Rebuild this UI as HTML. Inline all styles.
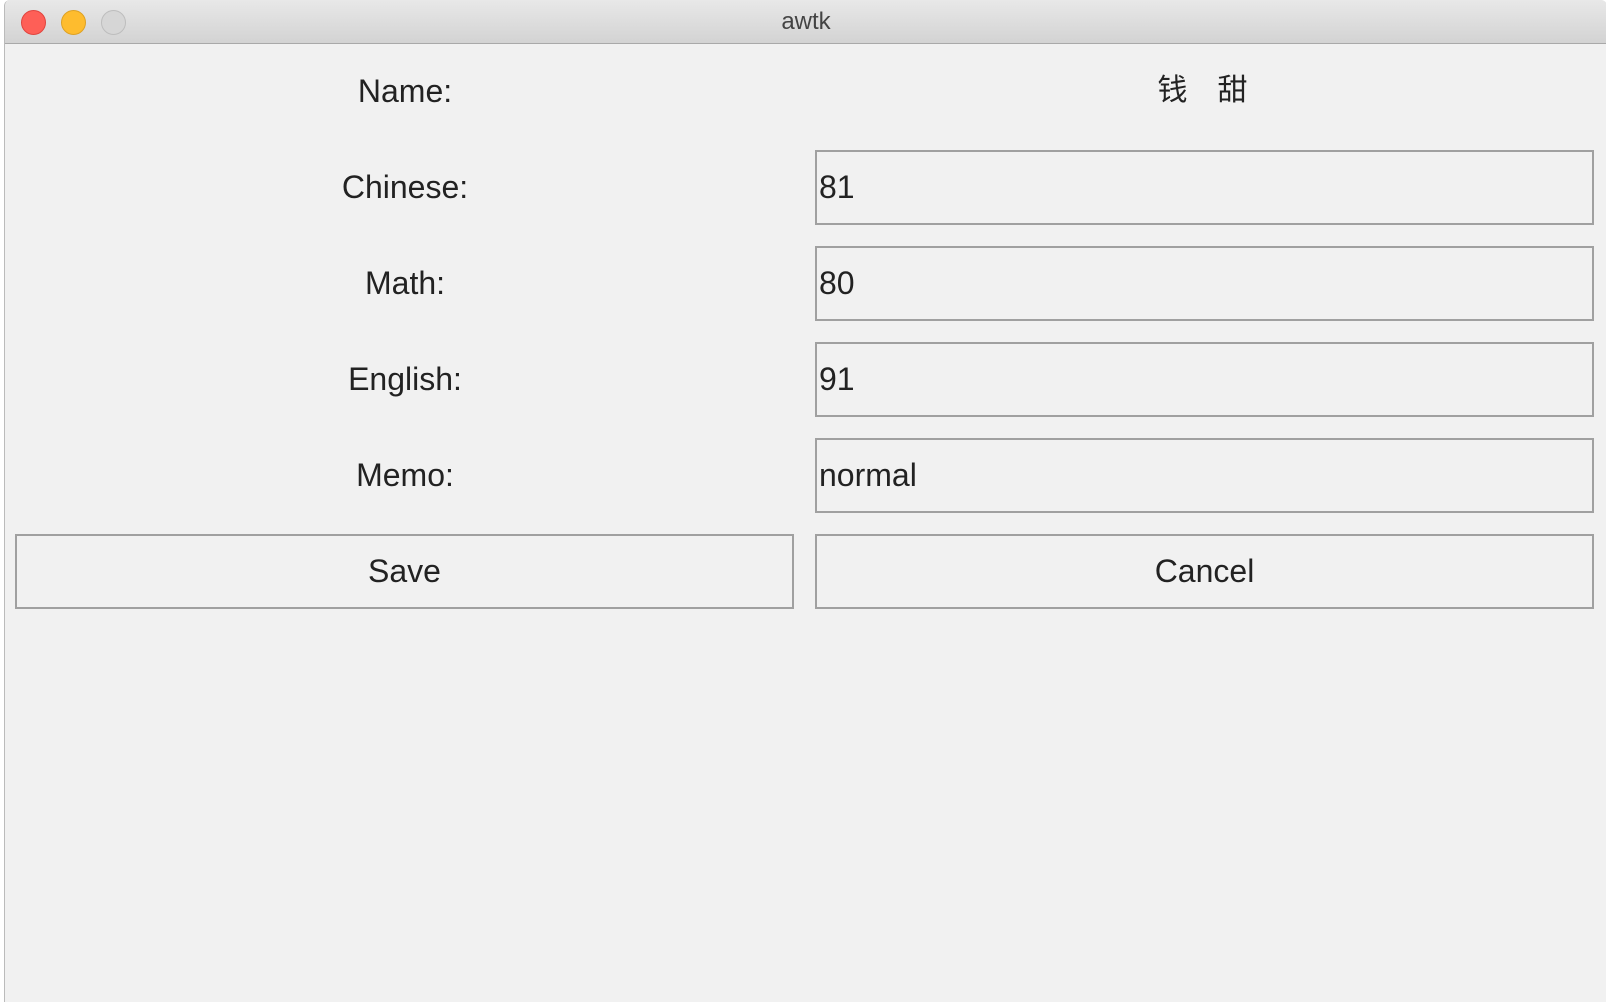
<!DOCTYPE html>
<html><head><meta charset="utf-8"><style>
body{margin:0;width:1606px;height:1002px;background:#fff;overflow:hidden;font-family:"Liberation Sans","Noto Sans CJK SC",sans-serif;}
.win{position:absolute;left:4px;top:0;width:1602px;height:1002px;background:#f1f1f1;border-radius:6px 6px 0 0;overflow:hidden;border-left:1px solid #bbb;}
.tb{position:absolute;left:0;top:0;right:0;height:43px;background:linear-gradient(#e8e8e8,#d3d3d3);border-bottom:1px solid #a9a9a9;text-align:center;font-size:24px;line-height:44px;color:#444;}
.c{position:absolute;top:10px;width:23px;height:23px;border-radius:50%;}
.lbl{position:absolute;left:10px;width:780px;text-align:center;font-size:32px;color:#222;height:74px;line-height:74px;}
.box{position:absolute;left:810px;width:773px;height:71px;border:2px solid #a0a0a0;font-size:32px;line-height:71px;padding-left:2px;box-sizing:content-box;color:#222;}
.btn{position:absolute;top:534px;height:71px;width:775px;border:2px solid #a0a0a0;text-align:center;font-size:32px;line-height:71px;color:#222;}
</style></head><body>
<div class="win">
<div class="tb">awtk
<div class="c" style="left:16px;background:#fe5f57;border:1px solid #e0443e"></div>
<div class="c" style="left:56px;background:#febc2e;border:1px solid #dea123"></div>
<div class="c" style="left:96px;background:#d6d6d6;border:1px solid #bdbdbd"></div>
</div>
<div class="lbl" style="top:54px">Name:</div>
<div class="lbl" style="top:54px;left:810px;width:775px;font-size:30px">钱　甜</div>
<div class="lbl" style="top:150px">Chinese:</div>
<div class="box" style="top:150px">81</div>
<div class="lbl" style="top:246px">Math:</div>
<div class="box" style="top:246px">80</div>
<div class="lbl" style="top:342px">English:</div>
<div class="box" style="top:342px">91</div>
<div class="lbl" style="top:438px">Memo:</div>
<div class="box" style="top:438px">normal</div>
<div class="btn" style="left:10px">Save</div>
<div class="btn" style="left:810px">Cancel</div>
</div>
</body></html>
